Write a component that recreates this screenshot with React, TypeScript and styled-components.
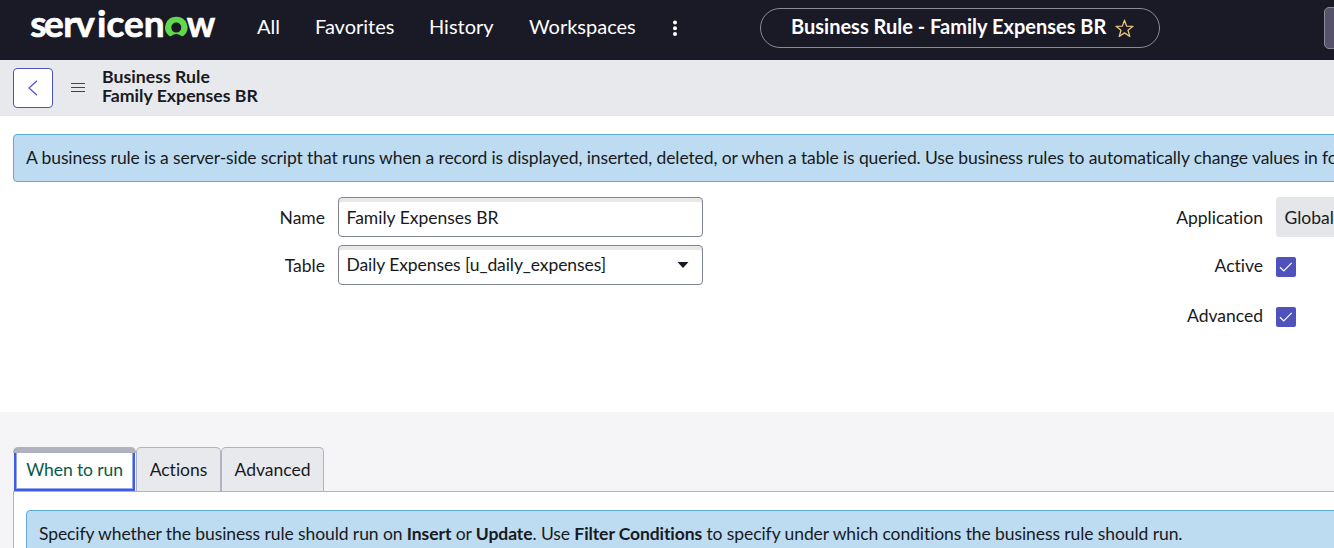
import React from 'react';
import styled, { createGlobalStyle } from 'styled-components';

const Global = createGlobalStyle`
  * { box-sizing: border-box; }
  html, body { margin: 0; height: 100%; overflow: hidden; background: #fff; }
  body {
    font-family: Lato, "Liberation Sans", sans-serif;
    font-size: 17.5px;
    line-height: 24px;
    color: #181a22;
    font-variant-ligatures: none;
  }
`;

const Page = styled.div`
  width: 1334px;
  height: 548px;
  overflow: hidden;
  display: flex;
  flex-direction: column;
`;

const TopBar = styled.header`
  height: 60px;
  flex: none;
  display: flex;
  align-items: flex-start;
  background: #1a1926;
  color: #fff;
  padding-left: 28px;
`;

const Logo = styled.svg`
  display: block;
  flex: none;
  width: 190px;
  height: 60px;
`;

const Nav = styled.nav`
  display: flex;
  width: 542px;
  flex: none;
  padding: 14px 0 0 39px;
  font-size: 20px;
`;

const NavItem = styled.a<{ $w: number }>`
  width: ${p => p.$w}px;
  flex: none;
  white-space: nowrap;
`;

const Dots = styled.svg`
  width: 8px;
  height: 18px;
  margin-top: 5px;
`;

const Pill = styled.div`
  width: 400px;
  height: 40px;
  flex: none;
  margin-top: 8px;
  padding: 0 0 4px 30px;
  border: 1px solid #8b8a98;
  border-radius: 20px;
  display: flex;
  align-items: center;
  font-size: 20px;
  font-weight: 700;
  white-space: nowrap;
`;

const PillTitle = styled.span`
  width: 324px;
`;

const Star = styled.svg`
  width: 19px;
  height: 19px;
  margin-top: 5px;
`;

const UserBox = styled.div`
  width: 60px;
  height: 42px;
  flex: none;
  margin: 7px 0 0 164px;
  border: 1px solid #8b8a98;
  border-radius: 5px;
  background: #56526b;
`;

const FormHeader = styled.div`
  height: 56px;
  flex: none;
  display: flex;
  padding: 8px 13px 0;
  background: #e8e9ed;
  border-bottom: 1px solid #e2e3e7;
`;

const BackButton = styled.button`
  width: 40px;
  height: 40px;
  padding: 0;
  border: 1px solid #4f52bd;
  border-radius: 4px;
  background: #fff;
  display: grid;
  place-items: center;
`;

const MenuIcon = styled.svg`
  width: 14px;
  height: 11px;
  margin: 14px 17.5px 0 17.5px;
`;

const Title = styled.h1`
  margin: -1px 0 0;
  font-size: 17.7px;
  line-height: 19px;
  font-weight: 700;
`;

const FormBody = styled.section`
  height: 296px;
  flex: none;
  padding: 18px 0 0 13px;
  background: #fff;
`;

const Notice = styled.div<{ $h: number; $ls: number }>`
  width: 1400px;
  height: ${p => p.$h}px;
  padding: 11px 12px;
  border: 1px solid #5cabdb;
  border-radius: 4px;
  background: #bddcf1;
  letter-spacing: ${p => p.$ls}px;
  white-space: nowrap;
`;

const Columns = styled.div`
  display: flex;
  margin-top: 15px;
`;

const Column = styled.div<{ $w: number; $gap: number }>`
  width: ${p => p.$w}px;
  flex: none;
  display: flex;
  flex-direction: column;
  gap: ${p => p.$gap}px;
`;

const Row = styled.div<{ $h?: number }>`
  height: ${p => p.$h ?? 40}px;
  display: flex;
  align-items: center;
`;

const Label = styled.label<{ $w: number }>`
  width: ${p => p.$w}px;
  flex: none;
  padding: 2px 13px 0 0;
  text-align: right;
`;

const Field = styled.div<{ $select?: boolean }>`
  width: 365px;
  height: 40px;
  flex: none;
  border: 1px solid #7f8494;
  border-radius: 4px;
  box-shadow: inset 0 4px 0 #e8e8e8;
  padding: ${p => (p.$select ? 0 : 2)}px 13px 0 7.5px;
  letter-spacing: ${p => (p.$select ? -0.08 : 0)}px;
  display: flex;
  align-items: center;
  justify-content: space-between;
  white-space: nowrap;
`;

const Caret = styled.svg`
  width: 12px;
  height: 6px;
`;

const ReadOnly = styled.div`
  width: 200px;
  height: 40px;
  flex: none;
  padding: 9px 8.5px;
  border-radius: 4px;
  background: #e5e6ea;
`;

const Check = styled.span`
  width: 20px;
  height: 20px;
  margin-top: 4px;
  border-radius: 2px;
  background: #4f52bd;
  display: grid;
  place-items: center;
`;

const TabSection = styled.section`
  flex: 1;
  padding: 35px 0 0 13px;
  background: #f5f5f7;
`;

const TabList = styled.div`
  display: flex;
  height: 44px;
`;

const Tab = styled.div<{ $w: number }>`
  width: ${p => p.$w}px;
  height: 44px;
  padding-top: 10px;
  text-align: center;
  border: 1px solid #b0b3bf;
  border-bottom: 0;
  border-radius: 5px 5px 0 0;
  background: #e8e9ed;
  white-space: nowrap;
`;

const ActiveTab = styled.div`
  width: 123px;
  height: 44px;
  border-top: 6px solid #b0b3bf;
  border-radius: 5px 5px 0 0;
  color: #065a48;
`;

const FocusRing = styled.div`
  height: 38px;
  margin-left: 1px;
  width: 121px;
  padding-top: 5px;
  text-align: center;
  letter-spacing: -0.1px;
  background: #fff;
  border: 2px solid #3e5be6;
  border-top: 0;
  box-shadow: inset 1px 0 0 #96a5f0, inset -1px -1px 0 #96a5f0;
  white-space: nowrap;
`;

const TabPanel = styled.div`
  width: 1400px;
  height: 80px;
  padding: 18px 0 0 12px;
  border: 1px solid #b0b3bf;
  background: #fff;
`;

function CheckBox() {
  return (
    <Check>
      <svg width="14" height="12" viewBox="0 0 14 12" fill="none" stroke="#fff" strokeWidth="1.2">
        <path d="M1 6.3 4.8 10 12.7 1.8" />
      </svg>
    </Check>
  );
}

export default function App() {
  return (
    <Page>
      <Global />
      <TopBar>
        <Logo viewBox="0 0 190 60" fill="#fff" stroke="#fff" strokeWidth="0.7" fontFamily="Lato, sans-serif" fontWeight="700" fontSize="37">
          <text x="2.2 16 35.2 47.2 69 78.5 96 115.8" y="36.5">servicen</text>
          <path d="M148.3 16.8a10.8 10.8 0 0 0-7.6 18.8c.8.8 2 .9 2.9.2a7.7 7.7 0 0 1 9.4 0c.9.7 2.1.6 2.9-.2a10.8 10.8 0 0 0-7.6-18.8Zm0 15.8a5 5 0 1 1 0-10 5 5 0 0 1 0 10Z" fill="#62d84e" stroke="none" />
          <text x="158.8" y="36.5" textLength="28.5" lengthAdjust="spacingAndGlyphs">w</text>
        </Logo>
        <Nav>
          <NavItem $w={58}>All</NavItem>
          <NavItem $w={114}>Favorites</NavItem>
          <NavItem $w={100}>History</NavItem>
          <NavItem $w={142}>Workspaces</NavItem>
          <Dots viewBox="0 0 8 18" fill="#fff">
            <circle cx="4" cy="3.5" r="2" />
            <circle cx="4" cy="9.2" r="2" />
            <circle cx="4" cy="14.9" r="2" />
          </Dots>
        </Nav>
        <Pill>
          <PillTitle>Business Rule - Family Expenses BR</PillTitle>
          <Star viewBox="0 0 19 19" fill="none" stroke="#e9c57c" strokeWidth="1.3" strokeLinejoin="round">
            <path d="M9.5 1.2 11.6 7.1 18 7.3 13 11.2 14.8 17.5 9.5 13.9 4.2 17.5 6 11.2 1 7.3 7.4 7.1Z" />
          </Star>
        </Pill>
        <UserBox />
      </TopBar>
      <FormHeader>
        <BackButton aria-label="Back">
          <svg width="12" height="18" viewBox="0 0 12 18" fill="none" stroke="#4f52bd" strokeWidth="1.2">
            <path d="M10 1.7 2 9l8 7.3" />
          </svg>
        </BackButton>
        <MenuIcon viewBox="0 0 14 11" stroke="#3a3d80" strokeWidth="1">
          <path d="M0 1.5h14M0 5.5h14M0 9.5h14" />
        </MenuIcon>
        <Title>Business Rule<br />Family Expenses BR</Title>
      </FormHeader>
      <FormBody>
        <Notice $h={48} $ls={-0.1}>
          A business rule is a server-side script that runs when a record is displayed, inserted, deleted, or when a table is queried. Use business rules to automatically change values in form fields
        </Notice>
        <Columns>
          <Column $w={925} $gap={8}>
            <Row>
              <Label $w={325}>Name</Label>
              <Field>Family Expenses BR</Field>
            </Row>
            <Row>
              <Label $w={325}>Table</Label>
              <Field $select>
                Daily Expenses [u_daily_expenses]
                <Caret viewBox="0 0 12 6" fill="#181a22"><path d="M.5 0h11L6 6Z" /></Caret>
              </Field>
            </Row>
          </Column>
          <Column $w={500} $gap={10}>
            <Row>
              <Label $w={338}>Application</Label>
              <ReadOnly>Global</ReadOnly>
            </Row>
            <Row $h={36}>
              <Label $w={338}>Active</Label>
              <CheckBox />
            </Row>
            <Row $h={44}>
              <Label $w={338}>Advanced</Label>
              <CheckBox />
            </Row>
          </Column>
        </Columns>
      </FormBody>
      <TabSection>
        <TabList>
          <ActiveTab><FocusRing>When to run</FocusRing></ActiveTab>
          <Tab $w={85}>Actions</Tab>
          <Tab $w={103}>Advanced</Tab>
        </TabList>
        <TabPanel>
          <Notice $h={49} $ls={-0.085}>
            Specify whether the business rule should run on <b>Insert</b> or <b>Update</b>. Use <b>Filter Conditions</b> to specify under which conditions the business rule should run.
          </Notice>
        </TabPanel>
      </TabSection>
    </Page>
  );
}
